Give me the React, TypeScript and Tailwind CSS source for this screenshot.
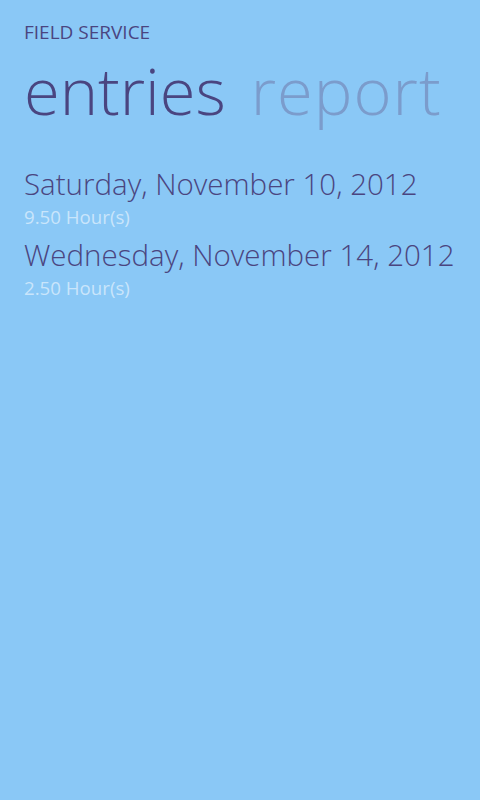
export default function App() {
  return (
    <div className="w-[480px] h-[800px] bg-[#8ac8f6] overflow-hidden" style={{ fontFamily: '"Open Sans", "Noto Sans", sans-serif' }}>
      <div className="pl-[24px] pt-[20px]">
        <div className="text-[19px] leading-[24px] text-[#4a4580] font-normal">FIELD SERVICE</div>
        <div className="flex gap-[25px] mt-[6px] text-[65px] leading-[80px] font-light whitespace-nowrap">
          <span className="text-[#4a4580]">entries</span>
          <span className="text-[#7b9ccc] tracking-[1px]">report</span>
        </div>
        <div className="mt-[34px] flex flex-col">
          <div>
            <div className="text-[29.5px] leading-[40px] text-[#4a4580] font-light">Saturday, November 10, 2012</div>
            <div className="text-[18.7px] leading-[24px] mt-[1px] text-[#c9e5fb]">9.50 Hour(s)</div>
          </div>
          <div className="mt-[6px]">
            <div className="text-[29.5px] leading-[40px] text-[#4a4580] font-light">Wednesday, November 14, 2012</div>
            <div className="text-[18.7px] leading-[24px] mt-[1px] text-[#c9e5fb]">2.50 Hour(s)</div>
          </div>
        </div>
      </div>
    </div>
  );
}
